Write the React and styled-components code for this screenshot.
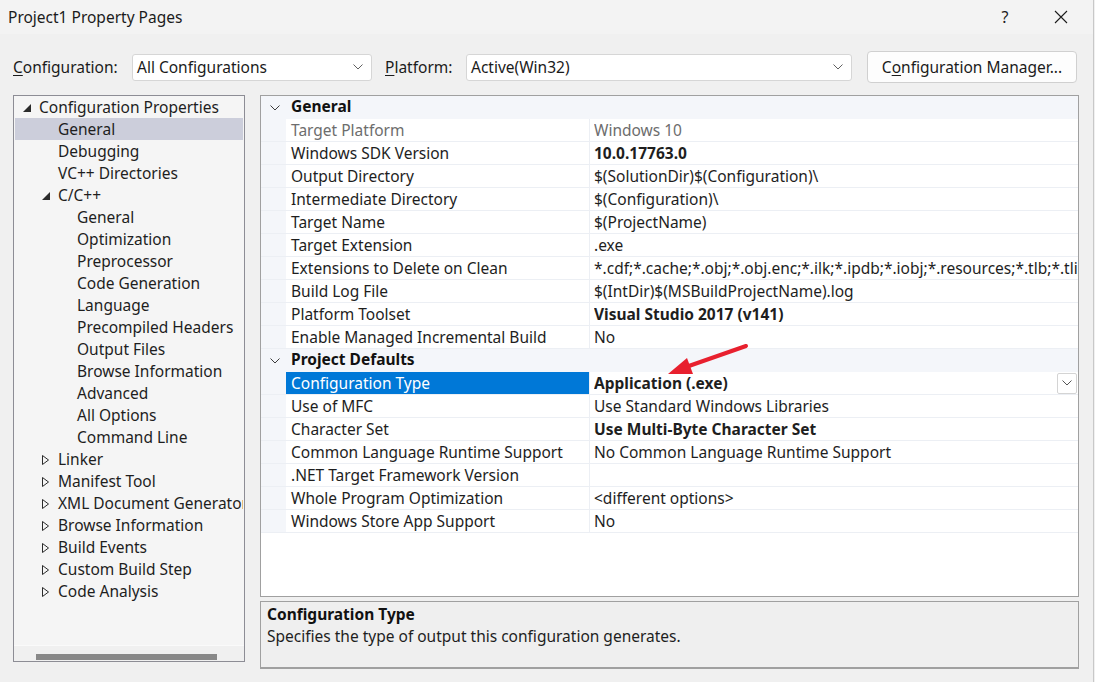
import React from 'react'
import styled, { createGlobalStyle } from 'styled-components'

const GlobalStyle = createGlobalStyle`
  html, body {
    margin: 0;
    padding: 0;
  }
  body {
    background: #f0f0f0;
    font-family: "Noto Sans", "Liberation Sans", sans-serif;
    color: #1b1b1b;
  }
`

const treeItems = [
  { label: 'Configuration Properties', level: 0, toggle: 'open' },
  { label: 'General', level: 1, selected: true },
  { label: 'Debugging', level: 1 },
  { label: 'VC++ Directories', level: 1 },
  { label: 'C/C++', level: 1, toggle: 'open' },
  { label: 'General', level: 2 },
  { label: 'Optimization', level: 2 },
  { label: 'Preprocessor', level: 2 },
  { label: 'Code Generation', level: 2 },
  { label: 'Language', level: 2 },
  { label: 'Precompiled Headers', level: 2 },
  { label: 'Output Files', level: 2 },
  { label: 'Browse Information', level: 2 },
  { label: 'Advanced', level: 2 },
  { label: 'All Options', level: 2 },
  { label: 'Command Line', level: 2 },
  { label: 'Linker', level: 1, toggle: 'closed' },
  { label: 'Manifest Tool', level: 1, toggle: 'closed' },
  { label: 'XML Document Generator', level: 1, toggle: 'closed' },
  { label: 'Browse Information', level: 1, toggle: 'closed' },
  { label: 'Build Events', level: 1, toggle: 'closed' },
  { label: 'Custom Build Step', level: 1, toggle: 'closed' },
  { label: 'Code Analysis', level: 1, toggle: 'closed' },
]

const sections = [
  {
    title: 'General',
    rows: [
      { name: 'Target Platform', value: 'Windows 10', dim: true },
      { name: 'Windows SDK Version', value: '10.0.17763.0', bold: true },
      { name: 'Output Directory', value: '$(SolutionDir)$(Configuration)\\' },
      { name: 'Intermediate Directory', value: '$(Configuration)\\' },
      { name: 'Target Name', value: '$(ProjectName)' },
      { name: 'Target Extension', value: '.exe' },
      { name: 'Extensions to Delete on Clean', value: '*.cdf;*.cache;*.obj;*.obj.enc;*.ilk;*.ipdb;*.iobj;*.resources;*.tlb;*.tli;*' },
      { name: 'Build Log File', value: '$(IntDir)$(MSBuildProjectName).log' },
      { name: 'Platform Toolset', value: 'Visual Studio 2017 (v141)', bold: true },
      { name: 'Enable Managed Incremental Build', value: 'No' },
    ],
  },
  {
    title: 'Project Defaults',
    rows: [
      { name: 'Configuration Type', value: 'Application (.exe)', bold: true, selected: true },
      { name: 'Use of MFC', value: 'Use Standard Windows Libraries' },
      { name: 'Character Set', value: 'Use Multi-Byte Character Set', bold: true },
      { name: 'Common Language Runtime Support', value: 'No Common Language Runtime Support' },
      { name: '.NET Target Framework Version', value: '' },
      { name: 'Whole Program Optimization', value: '<different options>' },
      { name: 'Windows Store App Support', value: 'No' },
    ],
  },
]

const Chevron = ({ color = '#606060' }) => (
  <svg width="10" height="6" viewBox="0 0 10 6">
    <polyline points="0.5,0.5 5,5 9.5,0.5" fill="none" stroke={color} strokeWidth="1" />
  </svg>
)

const Toggle = ({ type }) => {
  if (type === 'open') {
    return (
      <svg width="8" height="8" viewBox="0 0 8 8">
        <polygon points="8,0 8,8 0,8" fill="#2b2b2b" />
      </svg>
    )
  }
  if (type === 'closed') {
    return (
      <svg width="7" height="10" viewBox="0 0 7 10">
        <polygon points="0.5,0.5 6.5,5 0.5,9.5" fill="none" stroke="#2b2b2b" strokeWidth="1" />
      </svg>
    )
  }
  return null
}

function App() {
  return (
    <>
      <GlobalStyle />
      <Window>
        <TitleBar>
          <Title>Project1 Property Pages</Title>
          <TitleButton>?</TitleButton>
          <TitleButton>
            <svg width="14" height="14" viewBox="0 0 14 14">
              <path d="M1 1 L13 13 M13 1 L1 13" stroke="#1b1b1b" strokeWidth="1.1" />
            </svg>
          </TitleButton>
        </TitleBar>

        <Toolbar>
          <Label $width={119}><u>C</u>onfiguration:</Label>
          <Combo $width={240}>
            <span>All Configurations</span>
            <Chevron />
          </Combo>
          <Label $width={81} $gap={13}><u>P</u>latform:</Label>
          <Combo $width={386}>
            <span>Active(Win32)</span>
            <Chevron />
          </Combo>
          <ManagerButton>C<u>o</u>nfiguration Manager...</ManagerButton>
        </Toolbar>

        <Main>
          <Tree>
            <TreeList>
              {treeItems.map((item, i) => (
                <TreeRow key={i} $level={item.level} $selected={item.selected}>
                  <ToggleBox>
                    <Toggle type={item.toggle} />
                  </ToggleBox>
                  <TreeLabel>{item.label}</TreeLabel>
                </TreeRow>
              ))}
            </TreeList>
            <HScroll>
              <Thumb />
            </HScroll>
          </Tree>

          <RightColumn>
            <Grid>
              {sections.map((sec) => (
                <React.Fragment key={sec.title}>
                  <CategoryRow>
                    <Gutter>
                      <Chevron color="#3c3c3c" />
                    </Gutter>
                    <CategoryTitle>{sec.title}</CategoryTitle>
                  </CategoryRow>
                  {sec.rows.map((row) => (
                    <PropRow key={row.name}>
                      <Gutter />
                      <NameCell $selected={row.selected} $dim={row.dim}>{row.name}</NameCell>
                      <ValueCell $bold={row.bold} $dim={row.dim}>
                        <ValueText>{row.value}</ValueText>
                        {row.selected && (
                          <DropButton>
                            <Chevron color="#555" />
                          </DropButton>
                        )}
                      </ValueCell>
                    </PropRow>
                  ))}
                </React.Fragment>
              ))}
            </Grid>
            <Description>
              <DescTitle>Configuration Type</DescTitle>
              <DescText>Specifies the type of output this configuration generates.</DescText>
            </Description>
          </RightColumn>
        </Main>

        <Arrow width="1095" height="682" viewBox="0 0 1095 682">
          <line x1="746" y1="346" x2="686" y2="367" stroke="#e8202e" strokeWidth="4" strokeLinecap="round" />
          <polygon points="668,374 687,358 693,374" fill="#e8202e" />
        </Arrow>
      </Window>
    </>
  )
}

const Window = styled.div`
  position: relative;
  width: 1093px;
  height: 682px;
  background: #f0f0f0;
  border-right: 1px solid #c8c8c8;
  overflow: hidden;
  font-size: 15.5px;
`

const TitleBar = styled.div`
  height: 34px;
  display: flex;
  align-items: center;
  padding-left: 8px;
  padding-right: 4px;
  background: #f3f3f3;
`

const Title = styled.div`
  flex: 1;
  color: #1b1b1b;
`

const TitleButton = styled.div`
  width: 56px;
  height: 34px;
  display: flex;
  align-items: center;
  justify-content: center;
  font-size: 16px;
  color: #1b1b1b;
`

const Toolbar = styled.div`
  display: flex;
  align-items: center;
  padding: 17px 16px 12px 13px;
`

const Label = styled.div`
  width: ${(p) => p.$width}px;
  margin-left: ${(p) => (p.$gap ? p.$gap + 'px' : '0')};
  white-space: nowrap;
  u { text-underline-offset: 2px; }
`

const Combo = styled.div`
  box-sizing: border-box;
  width: ${(p) => p.$width}px;
  height: 27px;
  display: flex;
  align-items: center;
  justify-content: space-between;
  padding: 0 8px 0 4px;
  background: #fff;
  border: 1px solid #d6d6d6;
  border-radius: 3px;
`

const ManagerButton = styled.div`
  box-sizing: border-box;
  width: 210px;
  height: 32px;
  margin-left: 15px;
  display: flex;
  align-items: center;
  justify-content: center;
  background: #fdfdfd;
  border: 1px solid #d0d0d0;
  border-radius: 4px;
  u { text-underline-offset: 2px; }
`

const Main = styled.div`
  display: flex;
  gap: 15px;
  padding-left: 13px;
`

const Tree = styled.div`
  box-sizing: border-box;
  width: 232px;
  height: 567px;
  display: flex;
  flex-direction: column;
  background: #f5f5f5;
  border: 1px solid #8d8d95;
`

const TreeList = styled.div`
  flex: 1;
  overflow: hidden;
`

const TreeRow = styled.div`
  height: 22px;
  margin: 0 1px;
  display: flex;
  align-items: center;
  padding-left: ${(p) => 8 + p.$level * 19}px;
  background: ${(p) => (p.$selected ? '#cccedb' : 'transparent')};
  white-space: nowrap;
  overflow: hidden;
`

const ToggleBox = styled.div`
  width: 16px;
  flex-shrink: 0;
  display: flex;
  align-items: center;
  padding-top: 1px;
`

const TreeLabel = styled.span`
  color: #1e1e1e;
`

const HScroll = styled.div`
  height: 14px;
  border-top: 1px solid #fafafa;
  background: #f0f0f0;
  display: flex;
  align-items: flex-end;
  padding: 0 0 1px 22px;
`

const Thumb = styled.div`
  width: 181px;
  height: 6px;
  background: #888;
`

const RightColumn = styled.div`
  width: 819px;
  display: flex;
  flex-direction: column;
  gap: 4px;
`

const Grid = styled.div`
  box-sizing: border-box;
  height: 502px;
  background: #fff;
  border: 1px solid #a0a0a0;
  overflow: hidden;
`

const CategoryRow = styled.div`
  height: 23px;
  display: flex;
  align-items: center;
  background: #f4f6fa;
`

const Gutter = styled.div`
  width: 25px;
  height: 100%;
  flex-shrink: 0;
  display: flex;
  align-items: center;
  justify-content: center;
  padding-left: 2px;
  box-sizing: border-box;
  background: #f4f6fa;
`

const CategoryTitle = styled.div`
  padding: 0 0 3px 5px;
  font-weight: 700;
  color: #111;
`

const PropRow = styled.div`
  box-sizing: border-box;
  height: 23px;
  display: grid;
  grid-template-columns: 25px 304px 1fr;
  border-bottom: 1px solid #eceff4;
`

const NameCell = styled.div`
  display: flex;
  align-items: center;
  padding-left: 5px;
  border-right: 1px solid #eceff4;
  white-space: nowrap;
  overflow: hidden;
  background: ${(p) => (p.$selected ? '#0078d7' : '#fff')};
  color: ${(p) => (p.$selected ? '#fff' : p.$dim ? '#6d6d6d' : '#1e1e1e')};
`

const ValueCell = styled.div`
  position: relative;
  display: flex;
  align-items: center;
  padding-left: 4px;
  overflow: hidden;
  font-weight: ${(p) => (p.$bold ? 700 : 400)};
  color: ${(p) => (p.$dim ? '#6d6d6d' : '#1e1e1e')};
`

const ValueText = styled.span`
  flex: 1;
  white-space: nowrap;
  overflow: hidden;
`

const DropButton = styled.div`
  box-sizing: border-box;
  width: 20px;
  height: 21px;
  margin-right: 1px;
  display: flex;
  align-items: center;
  justify-content: center;
  background: #fff;
  border: 1px solid #d4d4d4;
  border-radius: 2px;
`

const Description = styled.div`
  box-sizing: border-box;
  height: 68px;
  padding: 1px 6px 0;
  background: #efefef;
  border: 1px solid #a0a0a0;
  border-bottom-width: 2px;
`

const DescTitle = styled.div`
  line-height: 22px;
  font-weight: 700;
  color: #111;
`

const DescText = styled.div`
  line-height: 22px;
  color: #1e1e1e;
`

const Arrow = styled.svg`
  position: absolute;
  left: 0;
  top: 0;
  pointer-events: none;
`

export default App
